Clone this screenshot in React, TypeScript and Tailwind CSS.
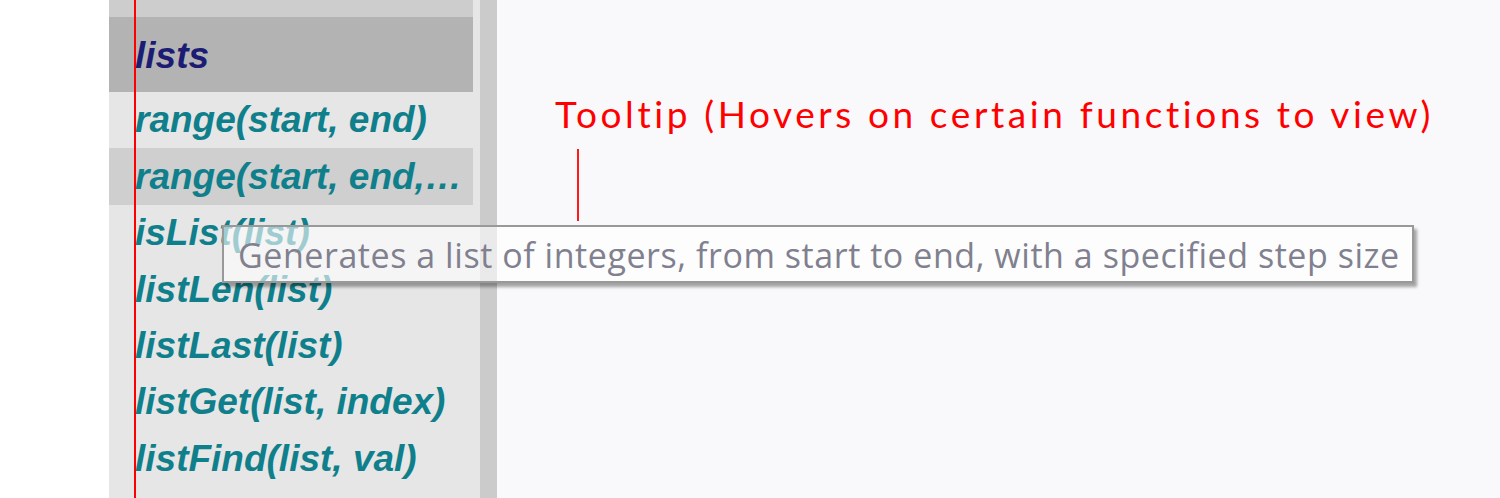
const functions = [
  'range(start, end)',
  'range(start, end,…',
  'isList(list)',
  'listLen(list)',
  'listLast(list)',
  'listGet(list, index)',
  'listFind(list, val)',
  'listSet(list, index, val)',
];

export default function App() {
  return (
    <div className="relative flex w-[1500px] h-[498px] overflow-hidden bg-white">
      {/* left margin */}
      <div className="w-[109px] shrink-0 bg-white" />

      {/* function browser panel */}
      <div className="flex w-[388px] shrink-0 bg-[#e6e6e6]">
        <div className="flex w-[364px] flex-col font-['Liberation_Sans',Arial,sans-serif] text-[37px] font-bold italic">
          <div className="h-[17px] shrink-0 bg-[#cdcdcd]" />
          <div className="flex h-[75px] shrink-0 items-center bg-[#b3b3b3] pl-[26px] pt-[3px] text-[#1c1c74]">
            lists
          </div>
          {functions.map((fn, i) => (
            <div
              key={fn}
              className={`flex h-[56.4px] shrink-0 items-center whitespace-nowrap pl-[26px] text-[#0f808b] ${
                i === 1 ? 'bg-[#cfcfcf]' : ''
              }`}
            >
              {fn}
            </div>
          ))}
        </div>
        <div className="ml-[7px] w-[17px] shrink-0 bg-[#cbcbcb]" />
      </div>

      {/* editor area */}
      <div className="flex-1 bg-[#f9f9fb]" />

      {/* annotation */}
      <div className="absolute left-[555px] top-[86px] whitespace-nowrap font-['Lato',sans-serif] text-[37px] tracking-[3.6px] text-[#ff0000]">
        Tooltip (Hovers on certain functions to view)
      </div>
      <div className="absolute left-[577px] top-[149px] h-[72px] w-[2px] bg-[#ff1a1a]" />
      <div className="absolute left-[134px] top-0 h-[498px] w-[2px] bg-[#ff0000]" />

      {/* tooltip */}
      <div className="absolute left-[222px] top-[225px] flex h-[58px] w-[1192px] items-center border-2 border-[#999999] bg-white/60 pl-[14px] pt-[2px] shadow-[3px_4px_3px_rgba(0,0,0,0.35)]">
        <span className="whitespace-nowrap font-['Open_Sans',sans-serif] text-[34px] tracking-[0.55px] text-[#80808f]">
          Generates a list of integers, from start to end, with a specified step size
        </span>
      </div>
    </div>
  );
}
